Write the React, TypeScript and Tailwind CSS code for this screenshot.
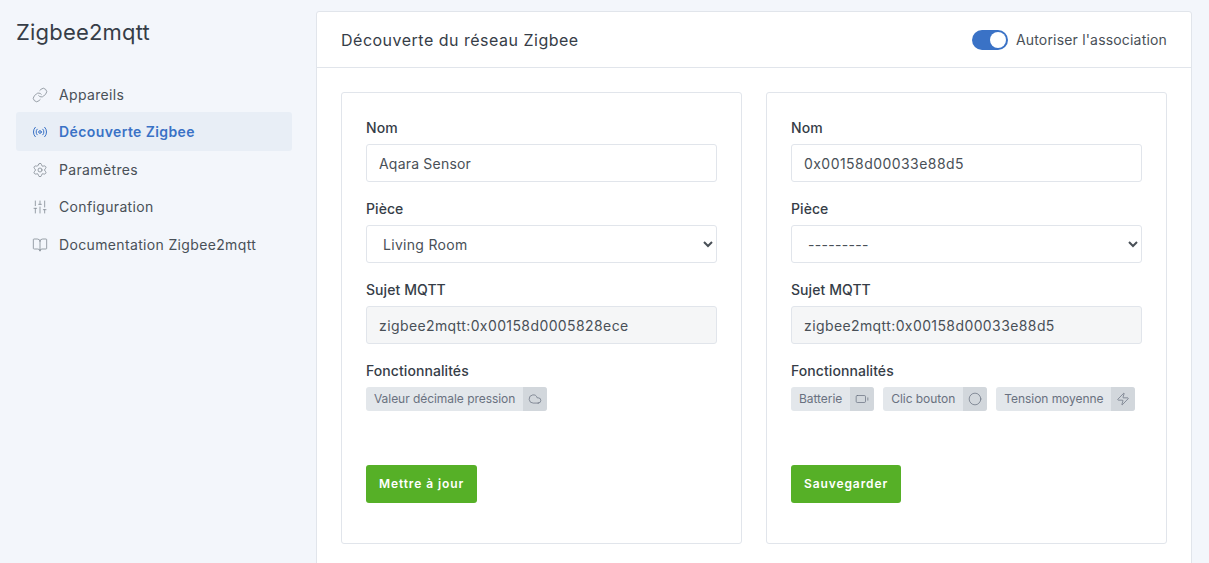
import { ReactNode } from 'react';
import { BookOpen, Cloud, Battery, Circle, Link, Radio, Settings, SlidersVertical, Zap } from 'lucide-react';

const NAV = [
  { label: 'Appareils', icon: <Link size={16} strokeWidth={1.25} /> },
  { label: 'Découverte Zigbee', icon: <Radio size={16} strokeWidth={1.5} />, active: true },
  { label: 'Paramètres', icon: <Settings size={16} strokeWidth={1.25} /> },
  { label: 'Configuration', icon: <SlidersVertical size={16} strokeWidth={1.25} /> },
  { label: 'Documentation Zigbee2mqtt', icon: <BookOpen size={16} strokeWidth={1.25} /> },
];

function Label({ children }: { children: ReactNode }) {
  return <label className="mb-[6px] block text-[14px] font-medium leading-[21px] tracking-[0.07px] text-[#363d47]">{children}</label>;
}

function Badge({ label, icon }: { label: string; icon: ReactNode }) {
  return (
    <span className="flex h-6 overflow-hidden rounded-[3px] bg-[#e3e7eb] text-[12px] leading-6 tracking-[-0.05px] text-[#697180]">
      <span className="px-2">{label}</span>
      <span className="flex w-6 items-center justify-center bg-[#d2d7dc]">{icon}</span>
    </span>
  );
}

function DeviceCard(props: { name: string; nameClass: string; room: string; topic: string; button: string; badges: ReactNode }) {
  return (
    <div className="h-[452px] flex-1 rounded-[3px] border border-[#e1e5eb] bg-white px-6 pt-[24px]">
      <Label>Nom</Label>
      <input
        readOnly
        value={props.name}
        className={`mb-[16px] block h-[38px] w-full rounded-[3px] border border-[#e1e5eb] bg-white px-3 text-[14px] text-[#495057] ${props.nameClass}`}
      />
      <Label>Pièce</Label>
      <select
        value={props.room}
        onChange={() => {}}
        className="mb-[16px] block h-[38px] w-full rounded-[3px] border border-[#e1e5eb] bg-white px-3 text-[14px] tracking-[0.3px] text-[#495057]"
      >
        <option>Living Room</option>
        <option>---------</option>
      </select>
      <Label>Sujet MQTT</Label>
      <input
        readOnly
        value={props.topic}
        className="mb-[16px] block h-[38px] w-full rounded-[3px] border border-[#e1e5eb] bg-[#f5f6f7] px-3 text-[14px] tracking-[0.4px] text-[#495057]"
      />
      <Label>Fonctionnalités</Label>
      <div className="flex gap-[9px]">{props.badges}</div>
      <button className="mt-[54px] h-[38px] rounded-[3px] bg-[#56b027] px-[13px] text-[12px] font-semibold tracking-[0.9px] text-white">
        {props.button}
      </button>
    </div>
  );
}

export default function App() {
  return (
    <div className="flex h-screen overflow-hidden bg-[#f3f6fb] font-['Inter',sans-serif] text-[#363d47]">
      <aside className="w-[316px] shrink-0 pl-4 pr-6">
        <h1 className="mt-[17px] text-[22px] leading-[30px] font-normal tracking-[0.2px]">Zigbee2mqtt</h1>
        <nav className="mt-[28px] flex flex-col">
          {NAV.map((item) => (
            <a
              key={item.label}
              className={
                item.active
                  ? 'flex h-[39px] items-center gap-[11px] rounded-[3px] bg-[#e8eef6] px-4 text-[14px] font-semibold tracking-[0.4px] text-[#3a72c6]'
                  : 'flex h-[37px] items-center gap-[11px] rounded-[3px] px-4 text-[14px] tracking-[0.35px] text-[#495057] first:pt-[2px] last:pt-[2px]'
              }
            >
              <span className={item.active ? 'text-[#3a72c6]' : 'text-[#868e96]'}>{item.icon}</span>
              {item.label}
            </a>
          ))}
        </nav>
      </aside>
      <main className="mt-[11px] mb-[-40px] w-[876px] shrink-0 rounded-[3px] border border-[#e1e5eb] bg-white">
        <header className="flex h-[56px] items-center justify-between border-b border-[#e1e5eb] px-6">
          <h2 className="text-[16px] font-normal tracking-[0.5px] text-[#363d47]">Découverte du réseau Zigbee</h2>
          <div className="flex items-center gap-2 text-[14px] tracking-[0.18px] text-[#495057]">
            <span className="flex h-5 w-9 items-center justify-end rounded-full bg-[#3a72c6] px-[2px]">
              <span className="h-4 w-4 rounded-full bg-white" />
            </span>
            Autoriser l'association
          </div>
        </header>
        <div className="flex gap-6 px-6 pt-6">
          <DeviceCard
            name="Aqara Sensor"
            nameClass="tracking-[0.2px]"
            room="Living Room"
            topic="zigbee2mqtt:0x00158d0005828ece"
            button="Mettre à jour"
            badges={<Badge label="Valeur décimale pression" icon={<Cloud size={14} strokeWidth={1.25} />} />}
          />
          <DeviceCard
            name="0x00158d00033e88d5"
            nameClass="tracking-[0.45px]"
            room="---------"
            topic="zigbee2mqtt:0x00158d00033e88d5"
            button="Sauvegarder"
            badges={
              <>
                <Badge label="Batterie" icon={<Battery size={14} strokeWidth={1.25} />} />
                <Badge label="Clic bouton" icon={<Circle size={14} strokeWidth={1.25} />} />
                <Badge label="Tension moyenne" icon={<Zap size={14} strokeWidth={1.25} />} />
              </>
            }
          />
        </div>
      </main>
    </div>
  );
}
